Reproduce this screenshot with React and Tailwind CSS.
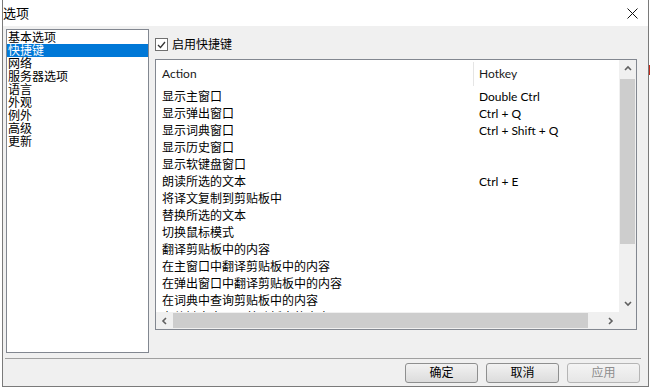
import React from "react";

const sections = ["基本选项", "快捷键", "网络", "服务器选项", "语言", "外观", "例外", "高级", "更新"];

const hotkeys = [
  ["显示主窗口", "Double Ctrl"],
  ["显示弹出窗口", "Ctrl + Q"],
  ["显示词典窗口", "Ctrl + Shift + Q"],
  ["显示历史窗口", ""],
  ["显示软键盘窗口", ""],
  ["朗读所选的文本", "Ctrl + E"],
  ["将译文复制到剪贴板中", ""],
  ["替换所选的文本", ""],
  ["切换鼠标模式", ""],
  ["翻译剪贴板中的内容", ""],
  ["在主窗口中翻译剪贴板中的内容", ""],
  ["在弹出窗口中翻译剪贴板中的内容", ""],
  ["在词典中查询剪贴板中的内容", ""],
  ["在软键盘中显示剪贴板中的内容", ""],
];

const font = { fontFamily: '"Noto Sans", "Noto Sans CJK SC", sans-serif' };
const latin = { fontFamily: 'Lato, "Noto Sans", sans-serif' };

function Chevron({ dir }) {
  const paths = {
    up: "M1 5 L4 2 L7 5",
    down: "M1 2 L4 5 L7 2",
    left: "M5 1 L2 4 L5 7",
    right: "M2 1 L5 4 L2 7",
  };
  const w = dir === "up" || dir === "down" ? 8 : 7;
  const h = dir === "up" || dir === "down" ? 7 : 8;
  return (
    <svg width={w} height={h} viewBox={`0 0 ${w} ${h}`}>
      <path d={paths[dir]} fill="none" stroke="#606060" strokeWidth="1.6" />
    </svg>
  );
}

function Button({ label, disabled }) {
  return (
    <button
      className={
        disabled
          ? "w-[73px] h-[20px] rounded-[3px] border border-[#b5b5b5] bg-gradient-to-b from-[#f4f4f4] to-[#e6e6e6] text-[12px] leading-none text-[#8d8d8d]"
          : "w-[73px] h-[20px] rounded-[3px] border border-[#8e8f8f] bg-gradient-to-b from-[#f2f2f2] to-[#dcdcdc] text-[12px] leading-none text-black"
      }
    >
      {label}
    </button>
  );
}

export default function App() {
  return (
    <div className="w-[650px] h-[391px] bg-white overflow-hidden flex" style={font}>
      <div className="ml-[2px] w-[647px] h-[387px] border-l border-r border-b border-[#7a7a7a] flex flex-col">
        {/* title bar */}
        <div className="h-[26px] bg-white flex items-center justify-between pr-[10px]">
          <span className="text-[13px] leading-none text-black">选项</span>
          <svg width="11" height="11" viewBox="0 0 11 11">
            <path d="M0.5 0.5 L10.5 10.5 M10.5 0.5 L0.5 10.5" stroke="#111" strokeWidth="1" />
          </svg>
        </div>

        <div className="flex-1 bg-[#f0f0f0] flex flex-col">
          <div className="flex pl-[3px] pt-[3px]">
            {/* section list */}
            <div className="w-[143px] h-[324px] border border-[#828790] bg-white pt-[1px]">
              {sections.map((s, i) => (
                <div
                  key={s}
                  className={
                    i === 1
                      ? "h-[13px] leading-[13px] text-[12px] pl-[1px] bg-[#0078d7] text-white"
                      : "h-[13px] leading-[13px] text-[12px] pl-[1px] text-black"
                  }
                >
                  {s}
                </div>
              ))}
            </div>

            {/* right panel */}
            <div className="ml-[6px] w-[482px] pt-[9px] flex flex-col">
              <div className="flex items-center h-[13px]">
                <div className="w-[13px] h-[13px] border border-[#707070] bg-white flex items-center justify-center">
                  <svg width="9" height="8" viewBox="0 0 9 8">
                    <path d="M1 4 L3.5 6.5 L8 1" fill="none" stroke="#333" strokeWidth="1.3" />
                  </svg>
                </div>
                <span className="ml-[4px] text-[12px] leading-none text-black">启用快捷键</span>
              </div>

              <div className="mt-[8px] h-[271px] border border-[#828790] bg-white flex flex-col">
                <div className="h-[252px] flex">
                  <div className="w-[463px] overflow-hidden">
                    <div className="h-[28px] flex items-center" style={latin}>
                      <div className="w-[317px] pl-[6px] text-[12px] text-[#1a1a1a]">Action</div>
                      <div className="w-[1px] h-[24px] bg-[#e5e5e5]" />
                      <div className="pl-[5px] text-[12px] text-[#1a1a1a]">Hotkey</div>
                    </div>
                    {hotkeys.map(([a, k]) => (
                      <div key={a} className="h-[17px] flex items-center">
                        <div className="w-[318px] pl-[6px] text-[12px] leading-none text-black whitespace-nowrap">{a}</div>
                        <div className="pl-[5px] text-[12px] leading-none text-black whitespace-nowrap" style={latin}>
                          {k}
                        </div>
                      </div>
                    ))}
                  </div>
                  {/* vertical scrollbar */}
                  <div className="w-[17px] bg-[#f0f0f0] flex flex-col">
                    <div className="h-[17px] flex items-center justify-center">
                      <Chevron dir="up" />
                    </div>
                    <div className="mt-[2px] mx-[1px] h-[165px] bg-[#cdcdcd]" />
                    <div className="flex-1" />
                    <div className="h-[17px] flex items-center justify-center">
                      <Chevron dir="down" />
                    </div>
                  </div>
                </div>
                {/* horizontal scrollbar */}
                <div className="h-[17px] flex">
                  <div className="w-[463px] bg-[#f0f0f0] flex">
                    <div className="w-[17px] flex items-center justify-center">
                      <Chevron dir="left" />
                    </div>
                    <div className="my-[1px] w-[415px] bg-[#cdcdcd]" />
                    <div className="flex-1" />
                    <div className="w-[17px] flex items-center justify-center">
                      <Chevron dir="right" />
                    </div>
                  </div>
                  <div className="w-[17px] bg-[#f0f0f0]" />
                </div>
              </div>
            </div>
          </div>

          <div className="mt-[5px] ml-[2px] w-[636px] h-[1px] bg-[#a0a0a0]" />

          <div className="mt-[4px] pr-[8px] flex justify-end gap-[8px]">
            <Button label="确定" />
            <Button label="取消" />
            <Button label="应用" disabled />
          </div>
        </div>
      </div>

      <div className="w-[1px] flex flex-col">
        <div className="mt-[65px] h-[10px] bg-[#c42b1c]" />
      </div>
    </div>
  );
}
